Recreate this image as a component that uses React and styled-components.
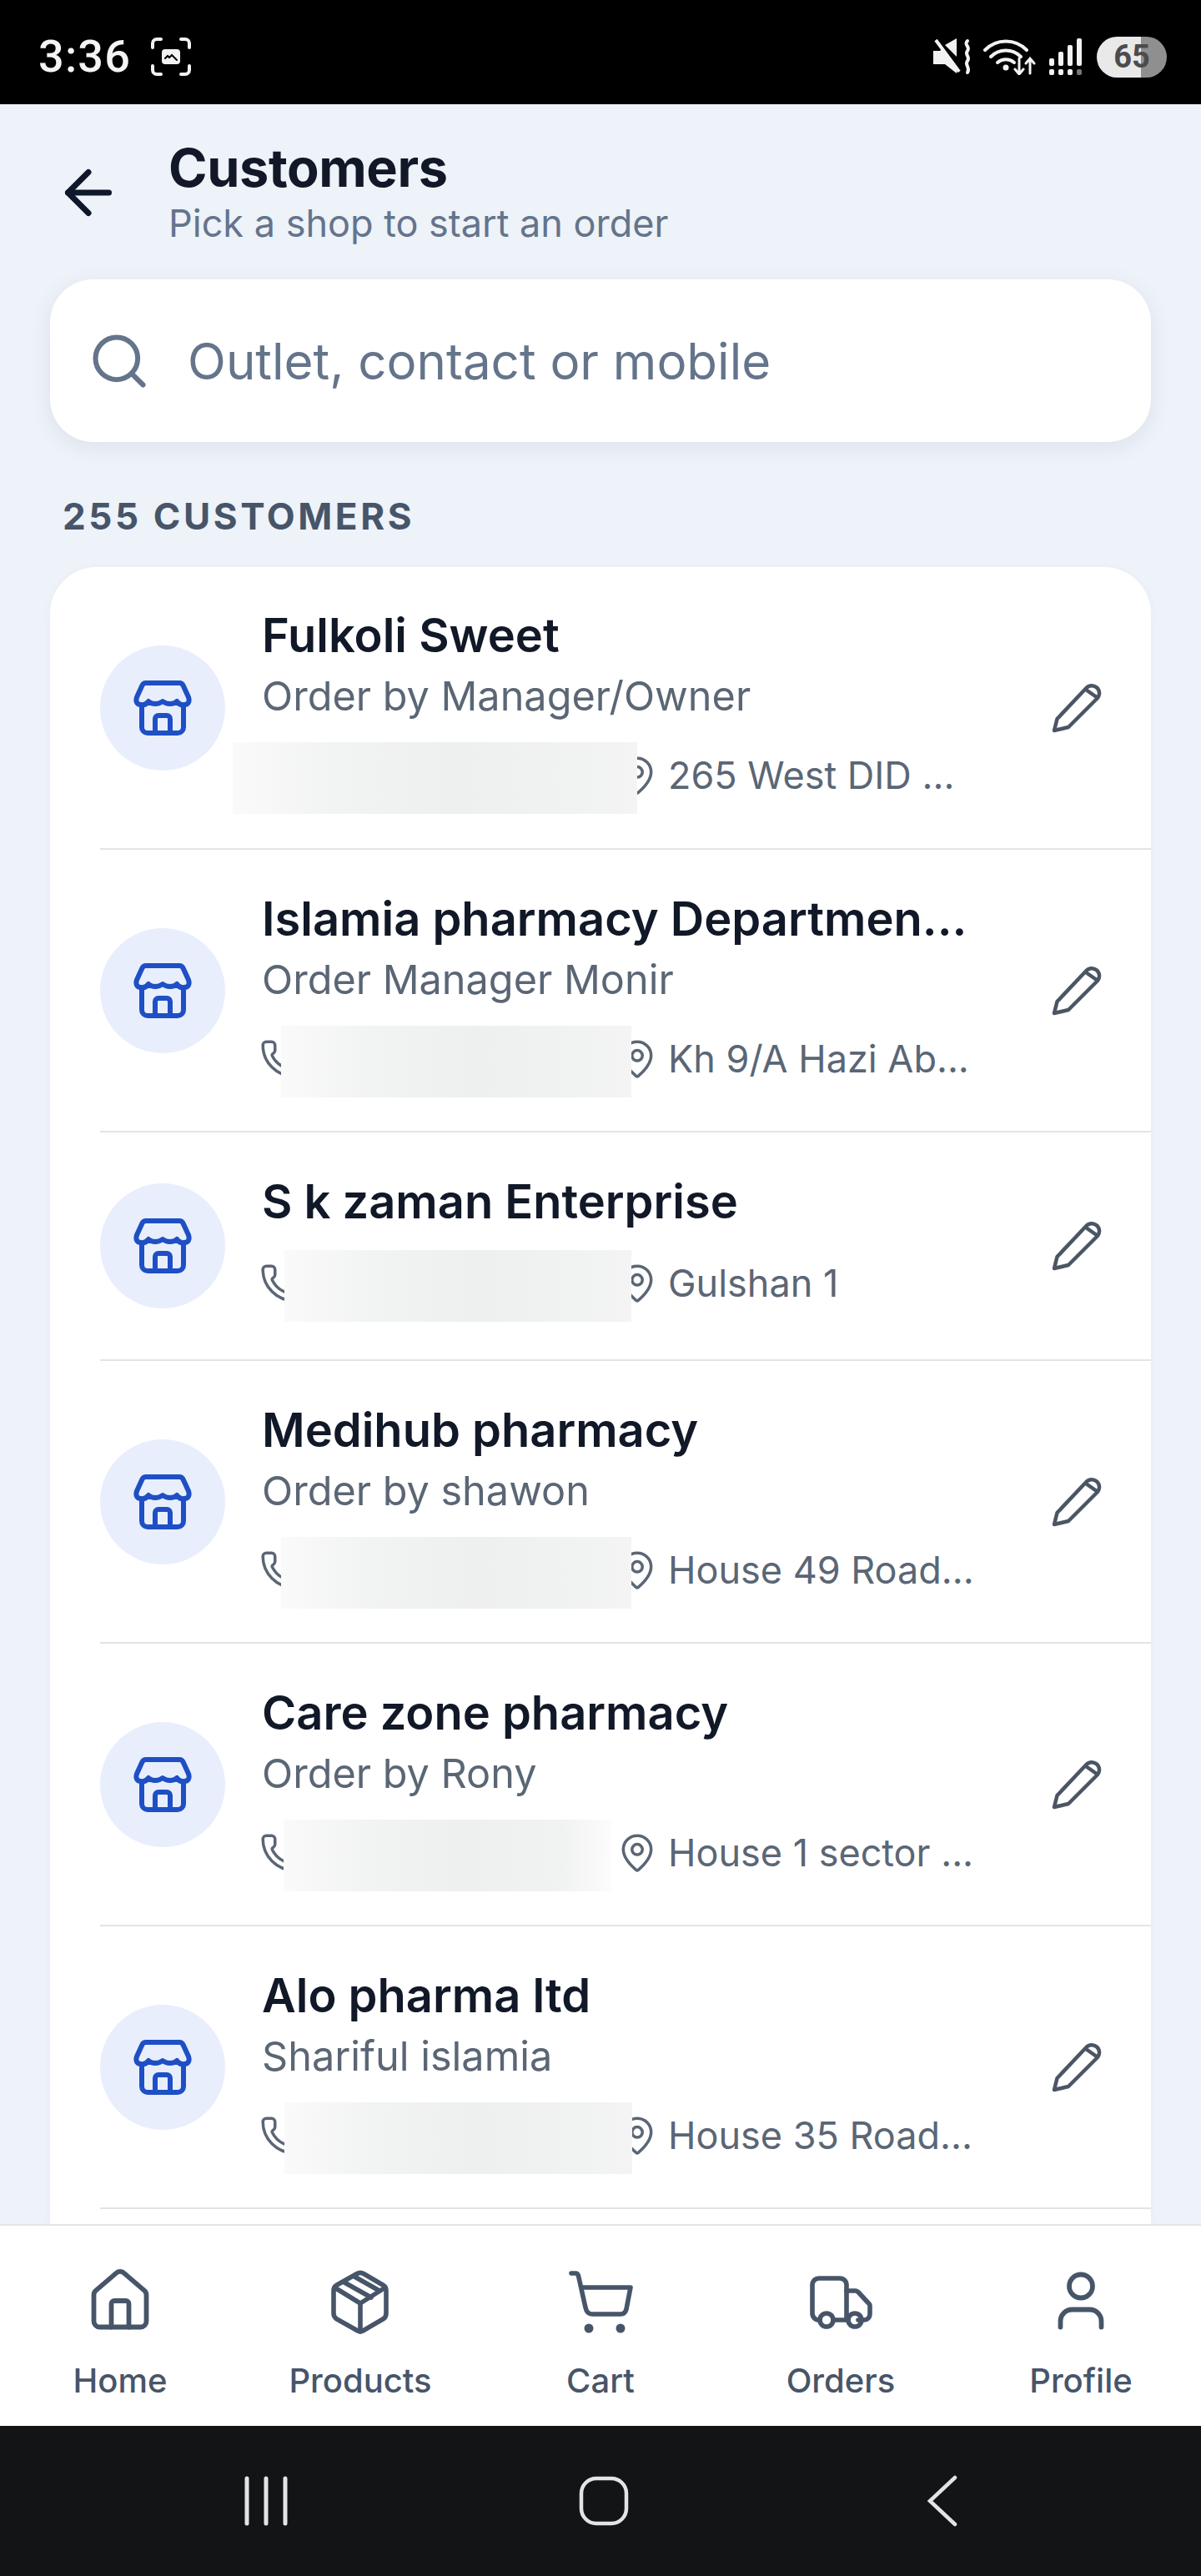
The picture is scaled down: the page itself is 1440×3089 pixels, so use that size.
import React from "react";
import styled, { createGlobalStyle } from "styled-components";
import { ArrowLeft, House, MapPin, Phone, Search, User } from "lucide-react";

const GlobalStyle = createGlobalStyle`
  html, body {
    margin: 0;
    padding: 0;
    background: #eef2f9;
  }
  * { box-sizing: border-box; }
`;

const Screen = styled.div`
  width: 1440px;
  height: 3089px;
  display: flex;
  flex-direction: column;
  overflow: hidden;
  font-family: Inter, "Liberation Sans", sans-serif;
  background: #eef2f9;
`;

const StatusBar = styled.header`
  height: 125px;
  flex: none;
  background: #000;
  display: flex;
  align-items: center;
  padding: 11px 41px 0 46px;
  color: #f4f4f4;
`;

const Clock = styled.span`
  font-family: Roboto, "Liberation Sans", sans-serif;
  font-size: 54px;
  font-weight: 500;
  line-height: 1;
  letter-spacing: 1.2px;
  margin-right: 24px;
`;

const StatusIcons = styled.div`
  margin-left: auto;
  display: flex;
  align-items: center;
  gap: 14px;
`;

const Battery = styled.div`
  width: 84px;
  height: 49px;
  border-radius: 25px;
  background: linear-gradient(90deg, #e9e9e9 63%, #8f8f8f 63%);
  color: #4c4c4c;
  font-family: Roboto, "Liberation Sans", sans-serif;
  font-size: 38px;
  font-weight: 700;
  display: flex;
  align-items: center;
  justify-content: center;
  margin-left: 2px;
`;

const Main = styled.main`
  flex: 1;
  min-height: 0;
  padding: 40px 60px 0;
  display: flex;
  flex-direction: column;
`;

const Header = styled.div`
  display: flex;
  align-items: center;
  gap: 54px;
  margin-left: 4px;
  color: #0f172a;
`;

const Title = styled.h1`
  margin: 0;
  font-size: 63px;
  line-height: 72px;
  font-weight: 700;
  letter-spacing: -0.4px;
  color: #111827;
`;

const Subtitle = styled.p`
  margin: 3px 0 0;
  font-size: 45px;
  line-height: 56px;
  font-weight: 400;
  color: #64748b;
`;

const SearchBox = styled.div`
  height: 195px;
  margin-top: 39px;
  flex: none;
  background: #fff;
  border-radius: 52px;
  display: flex;
  align-items: center;
  gap: 44px;
  padding-left: 45px;
  box-shadow: 0 6px 24px rgba(100, 116, 139, 0.12);
  color: #64748b;
`;

const SearchText = styled.span`
  font-size: 60px;
  color: #64748b;
`;

const Count = styled.div`
  margin: 62px 0 34px 15px;
  font-size: 44px;
  line-height: 54px;
  font-weight: 700;
  letter-spacing: 3.6px;
  color: #475569;
`;

const Card = styled.section`
  flex: 1;
  min-height: 0;
  background: #fff;
  border-radius: 56px 56px 0 0;
  padding-left: 60px;
  box-shadow: 0 2px 10px rgba(100, 116, 139, 0.06);
`;

const Row = styled.article`
  display: flex;
  align-items: center;
  gap: 44px;
  padding-right: 59px;
  border-bottom: 2px solid #e1e4e8;
`;

const Avatar = styled.div`
  width: 150px;
  height: 150px;
  flex: none;
  border-radius: 50%;
  background: #e8eefc;
  color: #1e4fc4;
  display: flex;
  align-items: center;
  justify-content: center;
`;

const RowBody = styled.div`
  flex: 1;
  min-width: 0;
  padding: 50px 0 ${({ $hasContact }) => ($hasContact ? "40px" : "45px")};

  article:first-child & {
    padding: 49px 0 41px;
  }
`;

const Name = styled.div`
  font-size: 56px;
  line-height: 66px;
  font-weight: 600;
  color: #111827;
  white-space: nowrap;
`;

const Contact = styled.div`
  margin-top: 10px;
  font-size: 48.6px;
  line-height: 60px;
  color: #5b6675;
  white-space: nowrap;
`;

const Meta = styled.div`
  position: relative;
  height: 86px;
  margin-top: 25px;
  margin-left: -3px;
  padding-bottom: 6px;
  display: flex;
  align-items: center;
  color: #5b6675;
`;

const NumberSlot = styled.span`
  width: 378px;
  flex: none;
`;

const Address = styled.span`
  margin-left: 12px;
  font-size: 45px;
  line-height: 58px;
  color: #5b6675;
  white-space: nowrap;
`;

/* blurred-out phone number, sits on top of the meta line */
const Redaction = styled.div`
  position: absolute;
  top: 0;
  bottom: 0;
  left: ${({ $left }) => $left}px;
  width: ${({ $width }) => $width}px;
  background: linear-gradient(
    90deg,
    #fafafa 0%,
    #f2f3f3 25%,
    #eeefef 55%,
    #f1f2f2 85%,
    ${({ $fadeRight }) => ($fadeRight ? "#fcfcfc" : "#f4f4f4")} 100%
  );
`;

const EditButton = styled.div`
  flex: none;
  display: flex;
  color: #4b5563;
`;

const TabBar = styled.nav`
  height: 242px;
  flex: none;
  background: #fff;
  border-top: 2px solid #e3e5e9;
  display: grid;
  grid-template-columns: repeat(5, 1fr);
`;

const Tab = styled.div`
  display: flex;
  flex-direction: column;
  align-items: center;
  padding-top: 48px;
  color: #475569;
`;

const TabLabel = styled.span`
  margin-top: 30px;
  font-size: 40px;
  line-height: 48px;
  font-weight: 500;
  color: #475569;
`;

const NavBar = styled.div`
  height: 180px;
  flex: none;
  background: #131416;
  display: flex;
  align-items: center;
  gap: 349px;
  padding-left: 293px;
  color: #e4e4e4;
`;

const BackGlyph = styled.svg`
  margin-left: 8px;
`;

const customers = [
  {
    name: "Fulkoli Sweet",
    contact: "Order by Manager/Owner",
    address: "265 West DID ...",
    left: -32,
    width: 485,
  },
  {
    name: "Islamia pharmacy Departmen...",
    contact: "Order Manager Monir",
    address: "Kh 9/A Hazi Ab...",
    left: 26,
    width: 420,
  },
  {
    name: "S k zaman Enterprise",
    address: "Gulshan 1",
    left: 30,
    width: 416,
  },
  {
    name: "Medihub pharmacy",
    contact: "Order by shawon",
    address: "House 49 Road...",
    left: 26,
    width: 420,
  },
  {
    name: "Care zone pharmacy",
    contact: "Order by Rony",
    address: "House 1 sector ...",
    left: 29,
    width: 393,
    fadeRight: true,
  },
  {
    name: "Alo pharma ltd",
    contact: "Shariful islamia",
    address: "House 35 Road...",
    left: 30,
    width: 417,
  },
];

const TabGlyph = ({ children }) => (
  <svg
    width="84"
    height="84"
    viewBox="0 0 84 84"
    fill="none"
    stroke="currentColor"
    strokeWidth="5.6"
    strokeLinecap="round"
    strokeLinejoin="round"
  >
    {children}
  </svg>
);

const BoxGlyph = () => (
  <TabGlyph>
    <path d="M38 9.500a8 8 0 0 1 8 0l23 13.500a8 8 0 0 1 4 7v27a8 8 0 0 1-4 7L46 77.500a8 8 0 0 1-8 0L14 64a8 8 0 0 1-4-7V30a8 8 0 0 1 4-7z" />
    <path d="M11 26l31 19 30-19M42 45v34" />
    <path d="M23 20l32 18M35 13l30 17" />
  </TabGlyph>
);

const CartGlyph = () => (
  <TabGlyph>
    <path d="M7 9h5c2 0 3 1 3.500 3L24 50c1 5 3 8 8 8h34c4 0 6-2 7-6l5-26H20" />
    <circle cx="28" cy="75" r="5.500" fill="currentColor" stroke="none" />
    <circle cx="66" cy="75" r="5.500" fill="currentColor" stroke="none" />
  </TabGlyph>
);

const TruckGlyph = () => (
  <TabGlyph>
    <path d="M17 65h-1a8 8 0 0 1-8-8V23a8 8 0 0 1 8-8h25a8 8 0 0 1 8 8v42" />
    <path d="M33 65h18" />
    <path d="M49 30h11a4 4 0 0 1 3 1.500l12 13a4 4 0 0 1 2 3V58a7 7 0 0 1-7 7h-7" />
    <circle cx="25" cy="65" r="8" />
    <circle cx="59" cy="65" r="8" />
  </TabGlyph>
);

const HouseGlyph = () => <House size={84} strokeWidth={1.65} />;
const UserGlyph = () => <User size={84} strokeWidth={1.65} />;

const tabs = [
  { label: "Home", Icon: HouseGlyph },
  { label: "Products", Icon: BoxGlyph },
  { label: "Cart", Icon: CartGlyph },
  { label: "Orders", Icon: TruckGlyph },
  { label: "Profile", Icon: UserGlyph },
];

const ScreenshotIcon = () => (
  <svg width="48" height="46" viewBox="0 0 48 46" fill="none" stroke="#f2f2f2" strokeWidth="4" strokeLinecap="round">
    <path d="M2 12V7a5 5 0 0 1 5-5h5M36 2h5a5 5 0 0 1 5 5v5M46 34v5a5 5 0 0 1-5 5h-5M12 44H7a5 5 0 0 1-5-5v-5" />
    <rect x="13" y="14" width="22" height="18" rx="4" fill="#f2f2f2" stroke="none" />
    <path d="M17 25l3-3 2 2 3-3 3 3 3 3" stroke="#000" strokeWidth="2" />
  </svg>
);

const MuteIcon = () => (
  <svg width="46" height="44" viewBox="0 0 46 44" fill="#f2f2f2">
    <path d="M0 15h8l2-2 18 22v7L14 31H0z" />
    <path d="M14 8l14-8v22z" />
    <path d="M3 2l28 38" stroke="#f2f2f2" strokeWidth="4" />
    <path
      d="M41 3c-5 5 4 7 0 12s4 7 0 12 4 8 0 14"
      fill="none"
      stroke="#f2f2f2"
      strokeWidth="4"
      strokeLinecap="round"
    />
  </svg>
);

const WifiIcon = () => (
  <svg width="64" height="44" viewBox="0 0 64 44" fill="none" stroke="#f2f2f2" strokeWidth="4" strokeLinecap="round">
    <path d="M2 14C16 0 38 0 52 14" />
    <path d="M9 22C19 12 35 12 45 22" />
    <path d="M17 29c6-5 14-5 20 0" />
    <circle cx="27" cy="35" r="3.500" fill="#f2f2f2" stroke="none" />
    <path d="M43 24v18M38 37l5 6 5-6" strokeWidth="3" />
    <path d="M56 42V24M51 30l5-6 5 6" strokeWidth="3" />
  </svg>
);

const SignalIcon = () => (
  <svg width="42" height="46" viewBox="0 0 42 46" fill="#f2f2f2">
    <rect x="1" y="25" width="6" height="9" rx="2" />
    <rect x="12" y="17" width="6" height="17" rx="2" />
    <rect x="23" y="9" width="6" height="25" rx="2" />
    <rect x="34" y="1" width="6" height="33" rx="2" />
    <rect x="1" y="38" width="6" height="7" rx="2" />
    <rect x="12" y="38" width="6" height="7" rx="2" />
    <rect x="23" y="38" width="6" height="7" rx="2" />
    <rect x="34" y="38" width="6" height="7" rx="2" fill="#777" />
  </svg>
);

const StoreIcon = () => (
  <svg width="70" height="66" viewBox="0 0 70 66" fill="none" stroke="currentColor" strokeWidth="6" strokeLinejoin="round" strokeLinecap="round">
    <path d="M15 3h40a5 5 0 0 1 4.600 3L66 20c2 6-1 9-5 9-4 1-7-1-9-4-4 4-12 4-17 0-5 4-13 4-17 0-2 3-5 5-9 4-4 0-7-3-5-9l6.400-14A5 5 0 0 1 15 3z" />
    <path d="M10 30v26a7 7 0 0 0 7 7h36a7 7 0 0 0 7-7V30" />
    <path d="M26 63V46a4 4 0 0 1 4-4h10a4 4 0 0 1 4 4v17" />
  </svg>
);

const PencilIcon = () => (
  <svg width="60" height="60" viewBox="0 0 60 60" fill="none" stroke="currentColor" strokeWidth="4.500" strokeLinecap="round" strokeLinejoin="round">
    <path d="M3 57l3.500-14L41 6.500a9 9 0 0 1 14 11.500L20 53z" />
    <path d="M41 8l13.500 9.500" />
  </svg>
);

const RecentsIcon = () => (
  <svg width="52" height="60" viewBox="0 0 52 60" stroke="currentColor" strokeWidth="5" strokeLinecap="round">
    <path d="M3 3v54M26 3v54M49 3v54" />
  </svg>
);

const HomeIcon = () => (
  <svg width="60" height="60" viewBox="0 0 60 60" fill="none" stroke="currentColor" strokeWidth="4.500">
    <rect x="3" y="3" width="54" height="54" rx="18" />
  </svg>
);

const BackIcon = () => (
  <BackGlyph width="38" height="62" viewBox="0 0 38 62" fill="none" stroke="currentColor" strokeWidth="4.500" strokeLinecap="round">
    <path d="M34 3L4 31l30 28" />
  </BackGlyph>
);

const App = () => {
  return (
    <Screen>
      <GlobalStyle />
      <StatusBar>
        <Clock>3:36</Clock>
        <ScreenshotIcon />
        <StatusIcons>
          <MuteIcon />
          <WifiIcon />
          <SignalIcon />
          <Battery>65</Battery>
        </StatusIcons>
      </StatusBar>

      <Main>
        <Header>
          <ArrowLeft size={84} strokeWidth={2} />
          <div>
            <Title>Customers</Title>
            <Subtitle>Pick a shop to start an order</Subtitle>
          </div>
        </Header>

        <SearchBox>
          <Search size={76} strokeWidth={1.9} />
          <SearchText>Outlet, contact or mobile</SearchText>
        </SearchBox>

        <Count>255 CUSTOMERS</Count>

        <Card>
          {customers.map((customer) => (
            <Row key={customer.name}>
              <Avatar>
                <StoreIcon />
              </Avatar>
              <RowBody $hasContact={Boolean(customer.contact)}>
                <Name>{customer.name}</Name>
                {customer.contact && <Contact>{customer.contact}</Contact>}
                <Meta>
                  <Phone size={50} strokeWidth={1.7} />
                  <NumberSlot />
                  <MapPin size={50} strokeWidth={1.7} />
                  <Address>{customer.address}</Address>
                  <Redaction
                    $left={customer.left}
                    $width={customer.width}
                    $fadeRight={customer.fadeRight}
                  />
                </Meta>
              </RowBody>
              <EditButton>
                <PencilIcon />
              </EditButton>
            </Row>
          ))}
        </Card>
      </Main>

      <TabBar>
        {tabs.map(({ label, Icon }) => (
          <Tab key={label}>
            <Icon />
            <TabLabel>{label}</TabLabel>
          </Tab>
        ))}
      </TabBar>

      <NavBar>
        <RecentsIcon />
        <HomeIcon />
        <BackIcon />
      </NavBar>
    </Screen>
  );
};

export default App;
